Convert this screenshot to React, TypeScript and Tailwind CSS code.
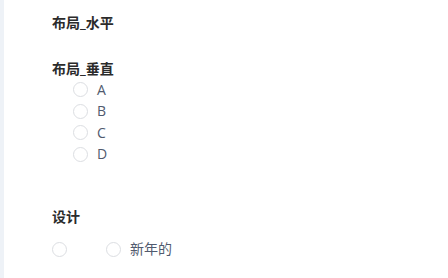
import React from "react";

const font = { fontFamily: '"Open Sans", "Noto Sans CJK SC", "Noto Sans", sans-serif' };

function Radio({ label }: { label?: string }) {
  return (
    <label className="flex items-center">
      <span className="inline-block w-[15px] h-[15px] rounded-full border border-[#dcdee2] bg-white" />
      {label !== undefined && <span className="ml-[9px] text-[14px] leading-[20px] text-[#515a6e]">{label}</span>}
    </label>
  );
}

export default function App() {
  return (
    <div className="flex w-[448px] h-[278px] bg-white overflow-hidden" style={font}>
      <div className="w-[4px] h-full bg-[#eef2f7] shrink-0" />
      <div className="flex flex-col pl-[48px] pt-[13px]">
        <div className="text-[14px] leading-[20px] font-bold text-[#2b2b2b]">布局_水平</div>
        <div className="mt-[26px] text-[14px] leading-[20px] font-bold text-[#2b2b2b]">布局_垂直</div>
        <div className="flex flex-col pl-[21px]">
          {["A", "B", "C", "D"].map((l) => (
            <div key={l} className="h-[21.5px] flex items-center">
              <Radio label={l} />
            </div>
          ))}
        </div>
        <div className="mt-[42px] text-[14px] leading-[20px] font-bold text-[#2b2b2b]">设计</div>
        <div className="mt-[12px] h-[20px] flex items-center">
          <Radio />
          <div className="ml-[39px]">
            <Radio label="新年的" />
          </div>
        </div>
      </div>
    </div>
  );
}
